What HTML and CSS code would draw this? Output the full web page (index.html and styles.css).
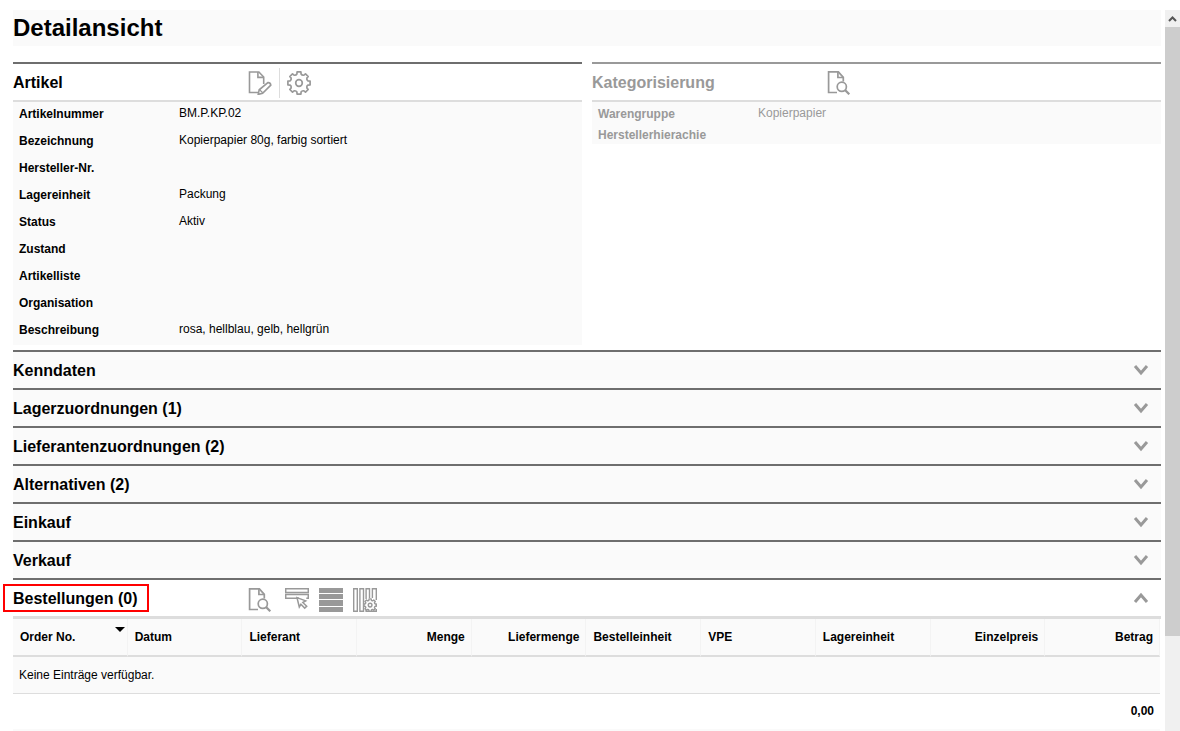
FILE: index.html
```html
<!DOCTYPE html>
<html lang="de">
<head>
<meta charset="utf-8">
<meta name="viewport" content="width=device-width, initial-scale=1">
<title>Detailansicht</title>
<link rel="stylesheet" href="styles.css">
</head>
<body>
<svg class="sprite" aria-hidden="true">
  <symbol id="chevron" viewBox="0 0 16 12"><path d="M2 2l6 7 6-7" fill="none" stroke="#999" stroke-width="3"/></symbol>
  <symbol id="doc-search" viewBox="0 0 24 24"><g fill="none" stroke="#999" stroke-width="1.700"><path d="M10 21.500H1.600V.9h9.800l4.900 5.500v4"/><path d="M10.900 1v5.500h5.400"/><circle cx="14.800" cy="15.800" r="4.600"/><path d="M18 19l4.300 4.300" stroke-width="2.200"/></g></symbol>
</svg>
<div class="window">
  <main class="page">
    <h1 class="page-title">Detailansicht</h1>
    <div class="panels">
      <section class="panel">
        <header class="panel-head">
          <h2 class="heading">Artikel</h2>
          <div class="tools">
            <button class="tool" type="button" aria-label="Bearbeiten"><svg viewBox="0 0 24 24"><g fill="none" stroke="#999" stroke-width="1.600"><path d="M10 21.500H1.500V1h9.400l4.800 5v7"/><path d="M9.900 1v5.400h5.600"/><path d="M10.200 23.400l1-4.600 8.700-7.200q2.500-.2 2.900 2.500l-8.200 8.200z"/><path d="M11.500 18.600l3.200 3.200" stroke-width="1.300"/></g></svg></button>
            <span class="divider"></span>
            <button class="tool" type="button" aria-label="Einstellungen"><svg viewBox="0 0 24 24"><g fill="none" stroke="#999" stroke-width="1.700" stroke-linejoin="round"><path d="M9.900 3L10.100 .9H13.900L14.100 3Q15 4.600 16.880 4.150L18.500 2.810L21.190 5.500L19.850 7.120Q19.400 9 21 9.900L23.100 10.100V13.900L21 14.100Q19.400 15 19.850 16.880L21.190 18.500L18.500 21.190L16.880 19.850Q15 19.400 14.100 21L13.900 23.100H10.100L9.900 21Q9 19.400 7.120 19.850L5.500 21.190L2.810 18.500L4.150 16.880Q4.600 15 3 14.100L.9 13.900V10.100L3 9.900Q4.600 9 4.150 7.120L2.810 5.500L5.500 2.810L7.120 4.150Q9 4.600 9.900 3z"/><circle cx="12" cy="12" r="3.300"/></g></svg></button>
          </div>
        </header>
        <dl class="fields">
          <div class="field"><dt>Artikelnummer</dt><dd>BM.P.KP.02</dd></div>
          <div class="field"><dt>Bezeichnung</dt><dd>Kopierpapier 80g, farbig sortiert</dd></div>
          <div class="field"><dt>Hersteller-Nr.</dt><dd></dd></div>
          <div class="field"><dt>Lagereinheit</dt><dd>Packung</dd></div>
          <div class="field"><dt>Status</dt><dd>Aktiv</dd></div>
          <div class="field"><dt>Zustand</dt><dd></dd></div>
          <div class="field"><dt>Artikelliste</dt><dd></dd></div>
          <div class="field"><dt>Organisation</dt><dd></dd></div>
          <div class="field"><dt>Beschreibung</dt><dd>rosa, hellblau, gelb, hellgrün</dd></div>
        </dl>
      </section>
      <section class="panel panel-muted">
        <header class="panel-head">
          <h2 class="heading">Kategorisierung</h2>
          <div class="tools">
            <button class="tool" type="button" aria-label="Details anzeigen"><svg><use href="#doc-search"/></svg></button>
          </div>
        </header>
        <dl class="fields">
          <div class="field"><dt>Warengruppe</dt><dd>Kopierpapier</dd></div>
          <div class="field"><dt>Herstellerhierachie</dt><dd></dd></div>
        </dl>
      </section>
    </div>

    <h2 class="bar"><button class="bar-toggle" type="button" aria-expanded="false"><span class="bar-label">Kenndaten</span><svg class="chevron"><use href="#chevron"/></svg></button></h2>
    <h2 class="bar"><button class="bar-toggle" type="button" aria-expanded="false"><span class="bar-label">Lagerzuordnungen (1)</span><svg class="chevron"><use href="#chevron"/></svg></button></h2>
    <h2 class="bar"><button class="bar-toggle" type="button" aria-expanded="false"><span class="bar-label">Lieferantenzuordnungen (2)</span><svg class="chevron"><use href="#chevron"/></svg></button></h2>
    <h2 class="bar"><button class="bar-toggle" type="button" aria-expanded="false"><span class="bar-label">Alternativen (2)</span><svg class="chevron"><use href="#chevron"/></svg></button></h2>
    <h2 class="bar"><button class="bar-toggle" type="button" aria-expanded="false"><span class="bar-label">Einkauf</span><svg class="chevron"><use href="#chevron"/></svg></button></h2>
    <h2 class="bar"><button class="bar-toggle" type="button" aria-expanded="false"><span class="bar-label">Verkauf</span><svg class="chevron"><use href="#chevron"/></svg></button></h2>

    <section class="orders">
      <header class="panel-head orders-head">
        <h2 class="heading"><span class="marked">Bestellungen (0)</span></h2>
        <div class="tools tools-wide">
          <button class="tool tool-wide" type="button" aria-label="Details anzeigen"><svg><use href="#doc-search"/></svg></button>
          <button class="tool" type="button" aria-label="Zeile auswählen"><svg viewBox="0 0 24 24"><g fill="none" stroke="#999" stroke-width="1.500"><path d="M.7.700h22.600v3.800H.7zM14 10.300H.7V6.500h22.600v3.800h-2"/><path d="M12 9.600l8.700 3.200-2.900 1.700 3.900 3.700-2 1.900-3.800-3.800-1.600 2.700z" fill="#fff"/></g></svg></button>
          <button class="tool" type="button" aria-label="Zeilenansicht"><svg viewBox="0 0 24 24"><path d="M0 0h24v5H0zM0 6h24v5H0zM0 12h24v6H0zM0 19h24v5H0z" fill="#999"/></svg></button>
          <button class="tool" type="button" aria-label="Spalten konfigurieren"><svg viewBox="0 0 24 24"><g fill="none" stroke="#999" stroke-width="1.400"><path d="M.7.700h3.600v22.600H.7zM6.900.700h3.600v22.600H6.900zM13.100 11V.700h3.400V10M19.400 10V.700h3.900V12M13.100 21v2.300h10.200V21"/><g transform="translate(10.400 10.400) scale(.56)" stroke-width="2.500" stroke-linejoin="round"><path fill="#fff" d="M9.900 3L10.100 .9H13.900L14.100 3Q15 4.600 16.880 4.150L18.500 2.810L21.190 5.500L19.850 7.120Q19.400 9 21 9.900L23.100 10.100V13.900L21 14.100Q19.400 15 19.850 16.880L21.190 18.500L18.500 21.190L16.880 19.850Q15 19.400 14.100 21L13.900 23.100H10.100L9.900 21Q9 19.400 7.120 19.850L5.500 21.190L2.810 18.500L4.150 16.880Q4.600 15 3 14.100L.9 13.900V10.100L3 9.900Q4.600 9 4.150 7.120L2.810 5.500L5.500 2.810L7.120 4.150Q9 4.600 9.900 3z"/><circle cx="12" cy="12" r="3.300"/></g></g></svg></button>
        </div>
        <button class="collapse" type="button" aria-label="Bestellungen einklappen" aria-expanded="true"><svg class="chevron chevron-up"><use href="#chevron"/></svg></button>
      </header>
      <table class="table">
        <thead>
          <tr>
            <th class="sorted" aria-sort="descending">Order No.</th><th>Datum</th><th>Lieferant</th><th class="num">Menge</th><th class="num">Liefermenge</th><th>Bestelleinheit</th><th>VPE</th><th>Lagereinheit</th><th class="num">Einzelpreis</th><th class="num">Betrag</th>
          </tr>
        </thead>
        <tbody><tr><td colspan="10">Keine Einträge verfügbar.</td></tr></tbody>
        <tfoot><tr><td class="num" colspan="10">0,00</td></tr></tfoot>
      </table>
    </section>
  </main>
  <div class="scrollbar">
    <button class="scroll-up" type="button" aria-label="Nach oben"><svg class="scroll-arrow" viewBox="0 0 9 6"><path d="M1 5l3.500-3.500L8 5" fill="none" stroke="#555" stroke-width="2"/></svg></button>
    <div class="scroll-track"><div class="scroll-thumb"></div></div>
  </div>
</div>
</body>
</html>
```

FILE: styles.css
```css
* { box-sizing: border-box; }

body {
  margin: 0;
  background: #fff;
  color: #000;
  font: 12px/16px "Liberation Sans", Arial, sans-serif;
}

button {
  margin: 0;
  padding: 0;
  border: 0;
  background: none;
  color: inherit;
  font: inherit;
  cursor: pointer;
}

h1, h2, dl, dd { margin: 0; }

.sprite {
  position: absolute;
  width: 0;
  height: 0;
}

.window {
  display: flex;
  gap: 4px;
  height: 100vh;
  padding: 10px 0 0 13px;
  overflow: hidden;
}

.page {
  flex: 1;
  min-width: 0;
}

.page-title {
  margin-bottom: 16px;
  background: #fafafa;
  font-size: 24px;
  line-height: 36px;
}

.panels {
  display: grid;
  grid-template-columns: 1fr 1fr;
  align-items: start;
  gap: 10px;
  margin-bottom: 5px;
}

.panel { border-top: 2px solid #6e6e6e; }

.panel-head {
  display: flex;
  align-items: center;
  height: 38px;
  border-bottom: 2px solid #ddd;
}

.heading {
  flex: 0 0 235px;
  padding-top: 2px;
  font-size: 16px;
  line-height: 20px;
}

.tools {
  display: flex;
  align-items: center;
  gap: 7px;
  padding-top: 2px;
}

.tools-wide { gap: 10px; padding-top: 4px; }

.tool, .tool svg {
  display: block;
  width: 24px;
  height: 24px;
}

.tool-wide { width: 27px; }

.divider {
  width: 1px;
  height: 30px;
  background: #ddd;
}

.fields { background: #fafafa; }

.field {
  display: grid;
  grid-template-columns: 160px 1fr;
  height: 27px;
  padding: 3px 6px 0;
}

.field dt {
  padding-top: 1px;
  font-weight: bold;
}

.panel-muted {
  border-top-color: #999;
  color: #999;
}

.panel-muted .field { height: 21px; }

.bar {
  border-top: 2px solid #6e6e6e;
  background: #fafafa;
  font-size: 16px;
}

.bar-toggle {
  display: flex;
  align-items: center;
  justify-content: space-between;
  width: 100%;
  height: 36px;
  padding-right: 12px;
}

.bar-label {
  padding-top: 2px;
  line-height: 20px;
}

.chevron {
  display: block;
  width: 16px;
  height: 12px;
}

.chevron-up { transform: rotate(180deg); }

.orders { border-top: 2px solid #6e6e6e; }

.orders-head {
  height: 39px;
  border-bottom-width: 3px;
}

.collapse {
  margin-left: auto;
  padding-right: 12px;
}

.marked { position: relative; }

.marked::after {
  content: "";
  position: absolute;
  inset: -6px -12px -5px -10px;
  border: 2px solid #f00;
}

.table {
  width: 100%;
  padding-right: 1px;
  table-layout: fixed;
  border-spacing: 0;
}

.table th {
  height: 38px;
  padding: 0 6px 0 7px;
  border-right: 1px solid #f3f3f3;
  border-bottom: 2px solid #ddd;
  background: #fafafa;
  text-align: left;
}

.table td {
  height: 37px;
  padding: 0 6px;
  border-bottom: 1px solid #ddd;
  background: #fafafa;
}

.table .num { text-align: right; }

.table tfoot td {
  padding-bottom: 2px;
  border-bottom: 2px solid #fafafa;
  background: #fff;
  font-weight: bold;
}

.sorted { position: relative; }

.sorted::after {
  content: "";
  position: absolute;
  top: 8px;
  right: 2px;
  border: 5px solid transparent;
  border-top-color: #000;
  border-bottom: 0;
}

.scrollbar {
  display: flex;
  flex: 0 0 15px;
  flex-direction: column;
  background: #f0f0f0;
}

.scroll-up {
  display: grid;
  flex: 0 0 17px;
  place-items: center;
}

.scroll-arrow {
  width: 9px;
  height: 6px;
}

.scroll-track { flex: 1; }

.scroll-thumb {
  height: 86.5%;
  background: #cdcdcd;
}
```
